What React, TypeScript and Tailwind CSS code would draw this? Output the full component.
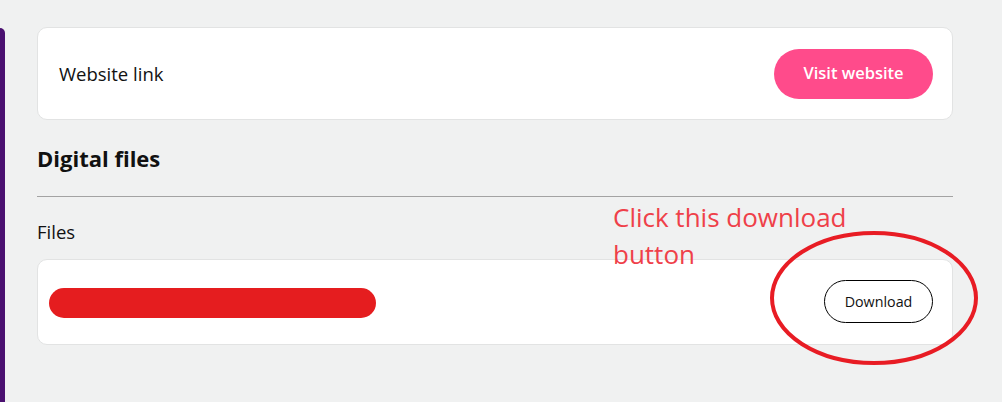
export default function App() {
  return (
    <main
      className="relative w-[1002px] h-[402px] overflow-hidden bg-[#f0f1f1] text-[#111]"
      style={{ fontFamily: '"Open Sans", "Noto Sans", sans-serif' }}
    >
      <div className="flex h-full">
        {/* left accent */}
        <div className="w-[5px] mt-[28px] bg-[#4a1070] rounded-tr-[6px]" />

        <div className="w-[916px] ml-[32px] pt-[27px]">
          {/* website card */}
          <div className="h-[93px] bg-white border border-[#e2e3e3] rounded-[10px] pl-[21px] pr-[19px] flex items-center justify-between">
            <span className="text-[18.5px]">Website link</span>
            <button className="h-[50px] w-[159px] rounded-full bg-[#ff4b8b] text-white text-[16.5px] font-semibold">
              Visit website
            </button>
          </div>

          <h2 className="mt-[24px] text-[22px] font-bold leading-[28px]">Digital files</h2>
          <div className="mt-[24px] h-px bg-[#a3a3a3]" />

          <div className="mt-[23px] text-[18.5px] leading-[24px]">Files</div>

          {/* files card */}
          <div className="mt-[15px] h-[86px] bg-white border border-[#e2e3e3] rounded-[10px] pl-[11px] pr-[19px] flex items-center justify-between">
            <div className="w-[327px] h-[30px] mt-[1px] rounded-full bg-[#e51d1f]" />
            <button className="h-[43px] w-[109px] mb-[1px] rounded-full border border-black text-[14.3px] bg-white">
              Download
            </button>
          </div>
        </div>
      </div>

      {/* annotation */}
      <div className="absolute left-[613px] top-[199px] text-[26px] leading-[37px] text-[#ef4049]">
        Click this download
        <br />
        button
      </div>
      <svg className="absolute left-[766px] top-[229px]" width="214" height="138" viewBox="0 0 214 138">
        <ellipse cx="108" cy="69" rx="102" ry="65" fill="none" stroke="#e81c24" strokeWidth="4" />
      </svg>
    </main>
  );
}
